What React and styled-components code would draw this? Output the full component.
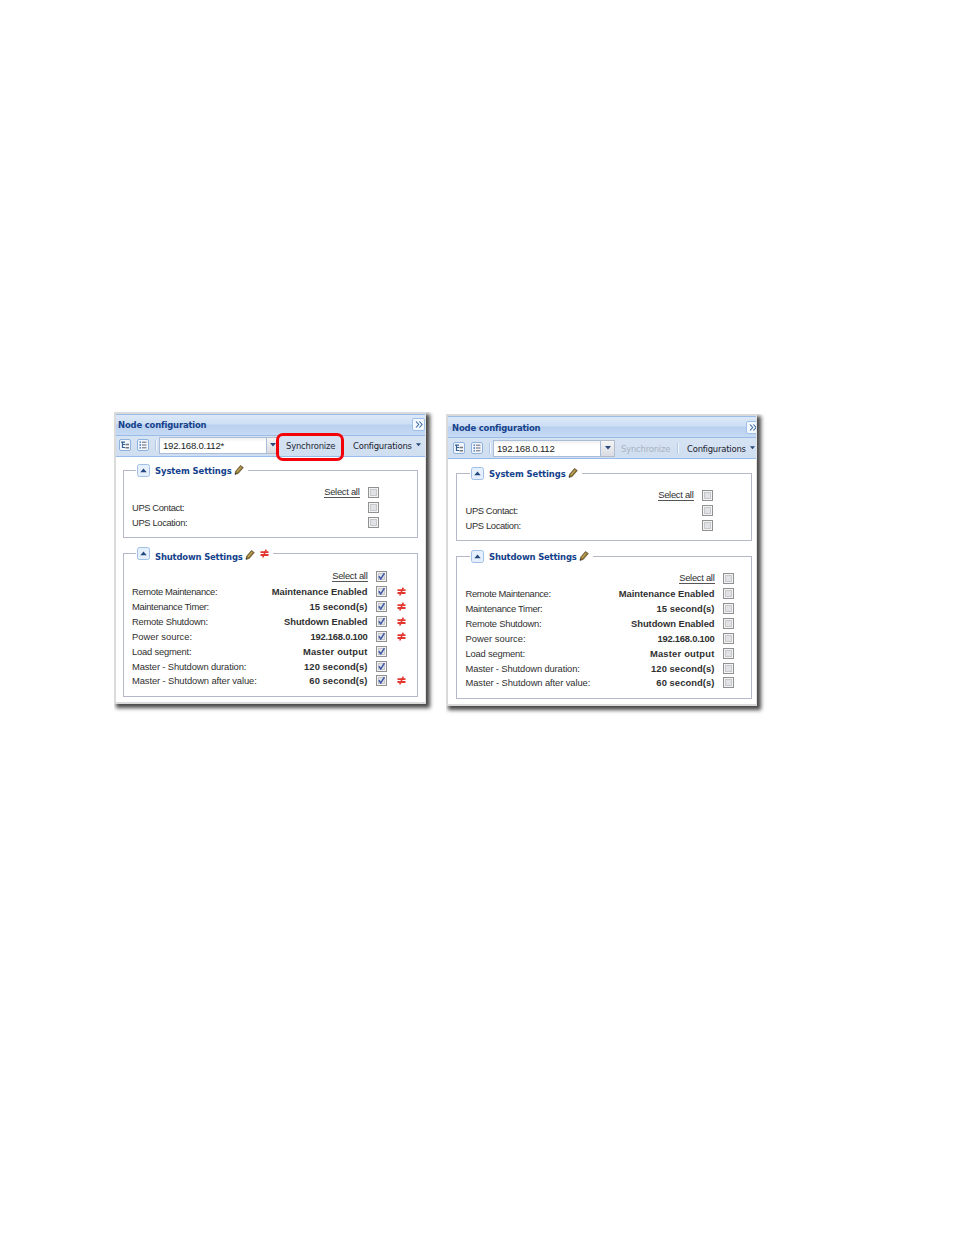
import React from 'react';
import styled, { createGlobalStyle } from 'styled-components';

const Global = createGlobalStyle`
  *, *::before, *::after { box-sizing: border-box; }
  body { margin: 0; background: #fff; }
`;

const Page = styled.main`
  width: 954px;
  height: 1235px;
  background: #fff;
  padding: 412px 0 0 114px;
  display: flex;
  align-items: flex-start;
  gap: 20px;
  overflow: hidden;
  font-family: 'Liberation Sans', Arial, sans-serif;
  font-size: 9.4px;
  color: #303030;
`;

const Panel = styled.section`
  width: ${p => p.$w}px;
  height: 292px;
  margin-top: ${p => p.$top}px;
  border: 2px solid #dadada;
  border-right: 1px solid #e4e4e4;
  background: #fff;
  box-shadow: 3px 3px 4px 1px rgba(0, 0, 0, 0.72);
  clip-path: inset(0 -12px -12px 0);
`;

const TitleBar = styled.header`
  height: 22px;
  display: flex;
  align-items: center;
  justify-content: space-between;
  padding: 0 0 ${p => p.$pb}px ${p => p.$pl}px;
  overflow: hidden;
  border-top: 1px solid #99bbe8;
  border-bottom: 1px solid #99bbe8;
  background: linear-gradient(#dce8f7 0, #cddff5 45%, #b9d0ef 50%, #c6daf4 100%);
`;

const Title = styled.h1`
  margin: 0;
  font: bold 9.4px 'DejaVu Sans Condensed', 'DejaVu Sans', sans-serif;
  font-stretch: condensed;
  letter-spacing: ${p => p.$ls || -0.17}px;
  color: #15428b;
  white-space: nowrap;
`;

const Collapse = styled.button`
  flex: none;
  width: 13px;
  height: 13px;
  margin-right: ${p => p.$mr}px;
  padding: 0;
  border: 1px solid #9ebfe8;
  border-radius: 2px;
  background: #f4f9ff;
  display: flex;
  align-items: center;
  justify-content: center;
`;

const Toolbar = styled.div`
  height: 21px;
  display: flex;
  align-items: center;
  padding: 0 0 ${p => p.$pb}px ${p => p.$pl}px;
  border-bottom: 1px solid #99bbe8;
  background: linear-gradient(#d6e3f3, #cfdef0);
  font-family: 'DejaVu Sans Condensed', 'DejaVu Sans', sans-serif;
  font-stretch: condensed;
  white-space: nowrap;
`;

const ToolIcon = styled.svg`
  flex: none;
  width: 12px;
  height: 12px;
  margin-right: 6px;
`;

const Separator = styled.span`
  flex: none;
  width: 2px;
  height: 11px;
  margin: 0 ${p => p.$mr}px 0 0;
  border-left: 1px solid #b3c9e6;
  border-right: 1px solid #f3f7fd;
`;

const Combo = styled.div`
  flex: none;
  display: flex;
  height: 17px;
  color: #222;
  font: 9.6px 'Liberation Sans', Arial, sans-serif;
`;

const Field = styled.span`
  width: 108px;
  padding-left: 3px;
  border: 1px solid #a9bdd8;
  background: linear-gradient(#f0f0f0, #fff 4px);
  line-height: 15px;
  letter-spacing: -0.24px;
`;

const Trigger = styled.span`
  width: ${p => p.$w}px;
  border: 1px solid #b4bccb;
  border-left: 0;
  background: linear-gradient(#f5f5f5, #d9dce2);
  display: flex;
  align-items: center;
  justify-content: center;
`;

const SyncSlot = styled.span`
  position: relative;
  flex: none;
  width: ${p => p.$w}px;
  margin-left: ${p => p.$ml}px;
  font-size: 9.4px;
  letter-spacing: -0.2px;
  color: ${p => (p.$disabled ? '#a9b3c1' : '#252b36')};
`;

const Highlight = styled.i`
  position: absolute;
  left: -10px;
  top: -7px;
  width: 68px;
  height: 28px;
  border: 3.5px solid #f40009;
  border-radius: 7px;
`;

const Menu = styled.span`
  flex: none;
  display: flex;
  align-items: center;
  gap: 4px;
  font-size: 9.4px;
  letter-spacing: -0.2px;
  color: #1c2230;
`;

const Body = styled.div`
  padding: ${p => p.$pad};
`;

const Group = styled.div`
  height: ${p => p.$h}px;
  margin-bottom: ${p => p.$mb || 0}px;
  border: 1px solid #b5b8c8;
  border-top: 0;
`;

const Legend = styled.div`
  height: 1px;
  margin: 0 -1px;
  display: flex;
  align-items: center;
`;

const Rule = styled.span`
  flex: ${p => (p.$w ? 'none' : 1)};
  width: ${p => p.$w || 0}px;
  height: 1px;
  background: #b5b8c8;
`;

const Toggle = styled.svg`
  flex: none;
  width: 13px;
  height: 13px;
  margin: 0 5px 0 1px;
`;

const LegendTitle = styled(Title)`
  width: ${p => p.$w}px;
  margin-top: ${p => p.$drop}px;
`;

const Mark = styled.svg`
  flex: none;
  width: ${p => p.$s}px;
  height: ${p => p.$s}px;
  margin-left: ${p => p.$ml || 0}px;
  margin-right: ${p => p.$mr || 0}px;
  margin-top: ${p => p.$mt || 0}px;
`;

const Rows = styled.div`
  padding: ${p => p.$top}px ${p => p.$right}px 0 ${p => p.$left}px;
`;

const Row = styled.div`
  height: 14.86px;
  display: flex;
  align-items: center;
  white-space: nowrap;
`;

const Label = styled.span`
  letter-spacing: ${p => p.$ls ?? -0.13}px;
`;

const Value = styled.span`
  flex: 1;
  margin-right: 8.5px;
  text-align: right;
  font-weight: bold;
  letter-spacing: ${p => p.$ls || 0}px;
`;

const SelectAll = styled.a`
  margin: 0 8.5px 0 auto;
  letter-spacing: -0.27px;
  line-height: 10px;
  border-bottom: 1px solid #555;
`;

const Check = styled.svg`
  flex: none;
  width: 11px;
  height: 11px;
`;

const DiffSlot = styled.span`
  width: 20px;
  padding-left: 10px;
  display: flex;
`;

const Checkbox = ({ on }) => (
  <Check viewBox="0 0 11 11">
    <rect x="0.5" y="0.5" width="10" height="10" fill="#f3f3f3" stroke="#919191" />
    <rect x="2.5" y="2.5" width="6" height="6" fill="#e1e2e5" stroke="#c6c8cc" />
    {on && <path d="M2.8 5.2 4.8 8 8.4 2.2" fill="none" stroke="#3f58a5" strokeWidth="1.5" />}
  </Check>
);

const Pencil = (props) => (
  <Mark $s={10} viewBox="0 0 10 10" {...props}>
    <path d="M1 9.3 1.6 6.3 6.5 0.5 9.3 2.6 4.2 8.5Z" fill="#8b7132" stroke="#574c31" strokeWidth="0.7" />
    <path d="M3 6.8 7.2 2" stroke="#cbb060" strokeWidth="1.1" />
    <path d="M0.8 9.5 1.3 7.9 2.4 8.9Z" fill="#222" />
  </Mark>
);

const Diff = (props) => (
  <Mark $s={9} viewBox="0 0 9 9" {...props}>
    <path d="M0.5 3.1H8.5M0.5 6H8.5" stroke="#e2362f" strokeWidth="1.9" />
    <path d="M6.3 0.6 2.7 8.5" stroke="#e2362f" strokeWidth="1.5" />
  </Mark>
);

const Chevron = ({ w = 5 }) => (
  <svg width={w} height="4" viewBox="0 0 6 4"><path d="M0 0H6L3 3.6Z" fill="#274878" /></svg>
);

function SettingsGroup({ title, tw, ls, height, mb, top, right, inset, drop, rows, diff }) {
  return (
    <Group $h={height} $mb={mb}>
      <Legend>
        <Rule $w={13 + inset} />
        <Toggle viewBox="0 0 13 13">
          <rect x="0.5" y="0.5" width="12" height="12" rx="2" fill="#e6f0fc" stroke="#9fbfe6" />
          <path d="M3.3 8.2 6.5 4.6 9.7 8.2Z" fill="#24477e" />
        </Toggle>
        <LegendTitle as="h2" $w={tw} $ls={ls} $drop={drop}>{title}</LegendTitle>
        <Pencil $ml={2} $mr={diff ? 5 : 4} $mt={drop - 2} />
        {diff && <Diff $mr={4} />}
        <Rule />
      </Legend>
      <Rows $top={top} $right={right} $left={8 + inset / 2}>
        <Row>
          <SelectAll>Select all</SelectAll>
          <Checkbox on={rows[0].on} />
          {diff && <DiffSlot />}
        </Row>
        {rows.map(r => (
          <Row key={r.label}>
            <Label $ls={r.ls}>{r.label}</Label>
            <Value $ls={r.vls}>{r.value}</Value>
            <Checkbox on={r.on} />
            {diff && <DiffSlot>{r.diff && <Diff />}</DiffSlot>}
          </Row>
        ))}
      </Rows>
    </Group>
  );
}

const system = [
  { label: 'UPS Contact:', ls: -0.38 },
  { label: 'UPS Location:', ls: -0.36 },
];
const shutdown = [
  { label: 'Remote Maintenance:', ls: -0.34, value: 'Maintenance Enabled', diff: true },
  { label: 'Maintenance Timer:', ls: -0.3, value: '15 second(s)', vls: 0.05, diff: true },
  { label: 'Remote Shutdown:', ls: -0.25, value: 'Shutdown Enabled', vls: -0.06, diff: true },
  { label: 'Power source:', ls: 0.02, value: '192.168.0.100', vls: -0.22, diff: true },
  { label: 'Load segment:', ls: -0.2, value: 'Master output', vls: 0.2 },
  { label: 'Master - Shutdown duration:', value: '120 second(s)', vls: 0.07 },
  { label: 'Master - Shutdown after value:', ls: -0.1, value: '60 second(s)', vls: 0.07, diff: true },
];

function NodePanel({ w, top, address, edited }) {
  const inset = edited ? 0 : 1;
  return (
    <Panel $w={w} $top={top}>
      <TitleBar $pb={edited ? 2 : 0} $pl={edited ? 2 : 4}>
        <Title>Node configuration</Title>
        <Collapse $mr={edited ? 0 : -3} aria-label="Collapse">
          <svg width="8" height="7" viewBox="0 0 8 7">
            <path d="M1 0.5 3.7 3.5 1 6.5M4.4 0.5 7.1 3.5 4.4 6.5" fill="none" stroke="#3c6ea8" strokeWidth="1.1" />
          </svg>
        </Collapse>
      </TitleBar>
      <Toolbar $pb={edited ? 2 : 0} $pl={edited ? 3 : 5}>
        <ToolIcon viewBox="0 0 12 12">
          <rect x="0.5" y="0.5" width="11" height="11" rx="1.5" fill="#f2f7fd" stroke="#8fb2dc" />
          <path d="M2 3.2H6M3.5 3V8.5H6M3.5 5.5H6" fill="none" stroke="#35608f" strokeWidth="1.2" />
          <path d="M6.5 5.5H10M6.5 8.8H10" stroke="#777" strokeWidth="1.6" />
        </ToolIcon>
        <ToolIcon viewBox="0 0 12 12">
          <rect x="0.5" y="0.5" width="11" height="11" rx="1.5" fill="#f2f7fd" stroke="#8fb2dc" />
          <path d="M2.5 3.2H4M2.5 6H4M2.5 8.8H4" stroke="#2f67b1" strokeWidth="1.3" />
          <path d="M5 3.2H9.5M5 6H9.5M5 8.8H9.5" stroke="#667" strokeWidth="1" />
        </ToolIcon>
        <Separator $mr={2} />
        <Combo>
          <Field>{address}</Field>
          <Trigger $w={edited ? 12 : 14}><Chevron w={6} /></Trigger>
        </Combo>
        <SyncSlot $w={edited ? 67 : 56} $ml={edited ? 7 : 6} $disabled={!edited}>
          Synchronize
          {edited && <Highlight />}
        </SyncSlot>
        {!edited && <Separator $mr={8} />}
        <Menu>Configurations <Chevron /></Menu>
      </Toolbar>
      <Body $pad={edited ? '13px 7px 0' : '14px 4px 0 8px'}>
        <SettingsGroup
          title="System Settings" tw={77} ls={-0.08} height={68} mb={15} top={14} drop={0}
          right={38} inset={inset} rows={system}
        />
        <SettingsGroup
          title="Shutdown Settings" tw={88} ls={-0.17} height={edited ? 144 : 143}
          top={edited ? 15.5 : 14.5} drop={edited ? 5 : 0} right={edited ? 10 : 17}
          inset={inset} diff={edited}
          rows={shutdown.map(r => ({ ...r, on: edited }))}
        />
      </Body>
    </Panel>
  );
}

export default function App() {
  return (
    <>
      <Global />
      <Page>
        <NodePanel w={312} top={0} address="192.168.0.112*" edited />
        <NodePanel w={311} top={2} address="192.168.0.112" edited={false} />
      </Page>
    </>
  );
}
